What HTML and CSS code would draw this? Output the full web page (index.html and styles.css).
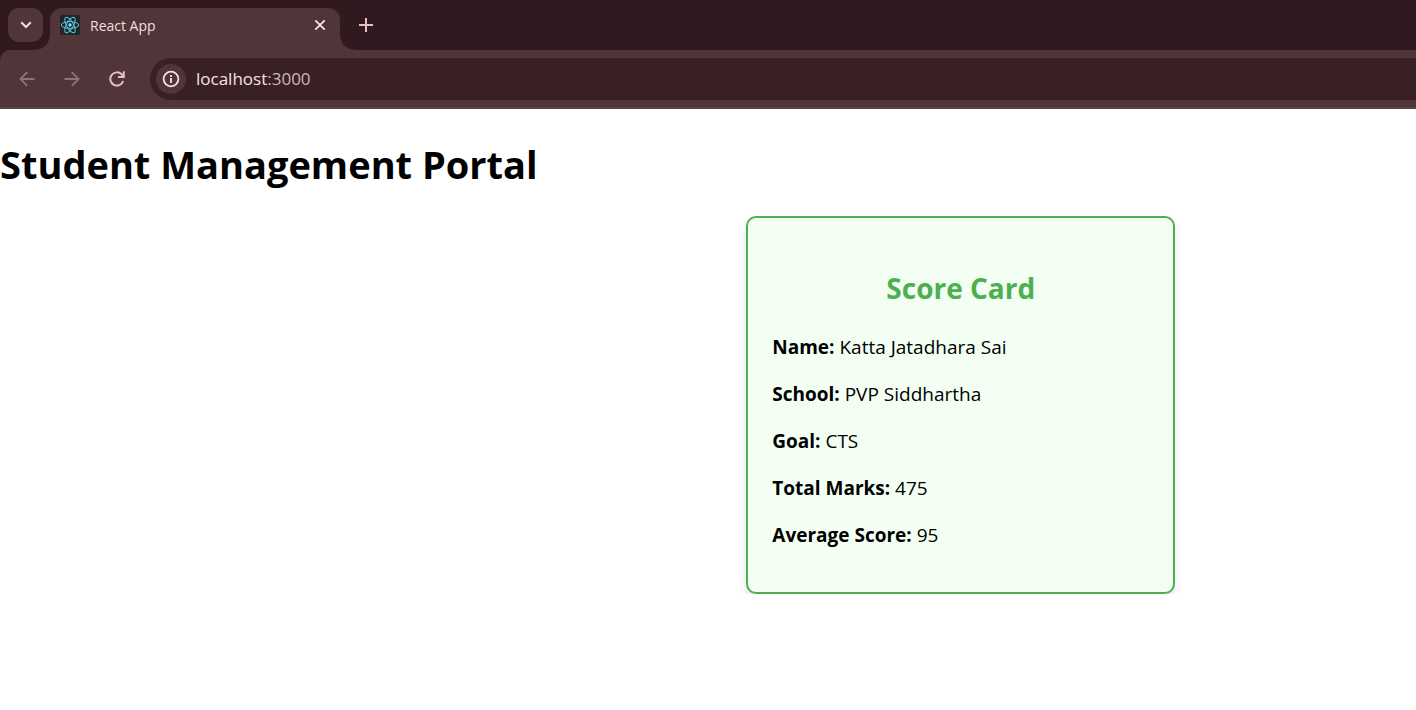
FILE: index.html
```html
<!DOCTYPE html>
<html lang="en">
<head>
<meta charset="utf-8">
<title>React App</title>
<link rel="stylesheet" href="styles.css">
</head>
<body>
<header class="browser">
  <div class="tab-strip">
    <button class="tab-search" aria-label="Search tabs">
      <svg width="12" height="8" viewBox="0 0 12 8" fill="none" stroke="#f3dde1" stroke-width="2"><path d="M1.2 1.2 6 6l4.800-4.800"/></svg>
    </button>
    <div class="tab">
      <svg class="favicon" width="20" height="20" viewBox="0 0 20 20" fill="none" stroke="#58c4dc" stroke-width="1">
        <rect width="20" height="20" rx="2" fill="#222526" stroke="none"/>
        <ellipse cx="10" cy="10" rx="8.700" ry="3.400"/>
        <ellipse cx="10" cy="10" rx="8.700" ry="3.400" transform="rotate(60 10 10)"/>
        <ellipse cx="10" cy="10" rx="8.700" ry="3.400" transform="rotate(120 10 10)"/>
        <circle cx="10" cy="10" r="1.700" fill="#7fe3fa" stroke="none"/>
      </svg>
      <span class="tab-title">React App</span>
      <button class="icon-button tab-close" aria-label="Close tab">
        <svg width="12" height="12" viewBox="0 0 12 12" stroke="#f6e3e6" stroke-width="1.800"><path d="M1.300 1.300l9.400 9.400M10.700 1.300l-9.400 9.400"/></svg>
      </button>
    </div>
    <button class="icon-button new-tab" aria-label="New tab">
      <svg width="14" height="14" viewBox="0 0 14 14" stroke="#e9bdc7" stroke-width="2"><path d="M7 0v14M0 7h14"/></svg>
    </button>
  </div>
  <nav class="toolbar" aria-label="Browser">
    <button class="icon-button nav-button" aria-label="Back" disabled>
      <svg width="16" height="16" viewBox="0 0 16 16" fill="none" stroke="#8f7378" stroke-width="1.800"><path d="M15.500 8H2M8.200 1.200 1.400 8l6.800 6.800"/></svg>
    </button>
    <button class="icon-button nav-button" aria-label="Forward" disabled>
      <svg width="16" height="16" viewBox="0 0 16 16" fill="none" stroke="#8f7378" stroke-width="1.800"><path d="M.5 8H14M7.800 1.200 14.600 8l-6.800 6.800"/></svg>
    </button>
    <button class="icon-button nav-button" aria-label="Reload">
      <svg width="16" height="16" viewBox="0 0 16 16" fill="none" stroke="#e9bdc7" stroke-width="2"><path d="M14.200 10A6.600 6.600 0 1 1 12.600 3.300L15 5.700"/><path d="M14.800 .3V6H9"/></svg>
    </button>
    <div class="address">
      <button class="icon-button site-info" aria-label="Site information">
        <svg width="18" height="18" viewBox="0 0 18 18" fill="none" stroke="#f6e3e6" stroke-width="1.800"><circle cx="9" cy="9" r="7.400"/><path d="M9 8v5M9 5v1.900"/></svg>
      </button>
      <a class="url" href="#">localhost<span class="port">:3000</span></a>
    </div>
  </nav>
</header>
<main class="page">
  <h1 class="page-title">Student Management Portal</h1>
  <section class="card">
    <h2 class="card-title">Score Card</h2>
    <p class="row"><b>Name:</b> Katta Jatadhara Sai</p>
    <p class="row"><b>School:</b> PVP Siddhartha</p>
    <p class="row"><b>Goal:</b> CTS</p>
    <p class="row"><b>Total Marks:</b> 475</p>
    <p class="row"><b>Average Score:</b> 95</p>
  </section>
</main>
</body>
</html>
```
FILE: styles.css
```css
* { box-sizing: border-box; }
body {
  margin: 0;
  background: #fff;
  color: #000;
  font-family: "Segoe UI", "Open Sans", "Noto Sans", sans-serif;
}
button {
  border: 0;
  padding: 0;
  background: none;
  display: flex;
  align-items: center;
  justify-content: center;
}
.browser { background: #301a1f; }
.tab-strip {
  display: flex;
  align-items: flex-start;
  height: 50px;
  padding: 8px 8px 0;
}
.tab-search {
  width: 35px;
  height: 34px;
  border-radius: 11px;
  background: #503539;
}
.tab {
  position: relative;
  display: flex;
  align-items: center;
  width: 290px;
  height: 42px;
  margin-left: 7px;
  padding: 0 10px 8px;
  border-radius: 12px 12px 0 0;
  background: #503539;
}
.tab::before,
.tab::after {
  content: "";
  position: absolute;
  bottom: 0;
  width: 14px;
  height: 14px;
}
.tab::before {
  right: 100%;
  background: radial-gradient(circle at 0 0, transparent 13px, #503539 14px);
}
.tab::after {
  left: 100%;
  background: radial-gradient(circle at 100% 0, transparent 13px, #503539 14px);
}
.tab-title {
  flex: 1;
  margin-left: 10px;
  color: #f3dde1;
  font-size: 14px;
}
.tab-close { width: 20px; height: 20px; }
.new-tab { width: 34px; height: 34px; margin-left: 9px; }
.toolbar {
  display: flex;
  align-items: center;
  height: 59px;
  padding-left: 4px;
  border-bottom: 2px solid #5a4347;
  border-radius: 10px 0 0 0;
  background: #503539;
}
.nav-button { width: 45px; height: 42px; }
.address {
  display: flex;
  flex: 1;
  align-items: center;
  height: 42px;
  margin-left: 11px;
  padding-left: 6px;
  border-radius: 21px 0 0 21px;
  background: #382025;
}
.site-info {
  width: 30px;
  height: 30px;
  border-radius: 50%;
  background: #503539;
}
.url {
  margin-left: 10px;
  color: #f6e3e6;
  font-size: 17px;
  text-decoration: none;
}
.port { color: #cdb8bc; }
.page { padding-top: 28px; }
.page-title {
  margin: 0 0 25px;
  font-size: 38px;
  line-height: 54px;
}
.card {
  max-width: 429px;
  margin: 0 17% 0 auto;
  padding: 50px 24px 43px;
  border: 2px solid #4caf50;
  border-radius: 10px;
  background: #f4fff4;
  box-shadow: 0 4px 8px rgba(0, 0, 0, 0.1);
}
.card-title {
  margin: 0 0 26px;
  color: #4caf50;
  font-size: 28px;
  line-height: 40px;
  text-align: center;
}
.row {
  margin: 0 0 20px;
  font-size: 19px;
  line-height: 27px;
}
.row:last-child { margin-bottom: 0; }
```
